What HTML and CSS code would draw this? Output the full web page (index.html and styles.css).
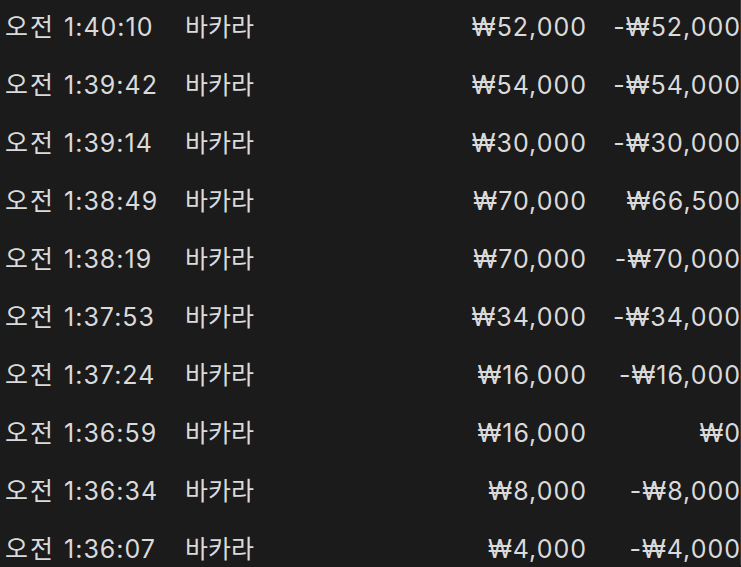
FILE: index.html
```html
<!DOCTYPE html>
<html lang="ko">
<head>
<meta charset="utf-8">
<link rel="stylesheet" href="styles.css">
</head>
<body>
<div class="list">
  <div class="row"><span class="time"><span class="ampm">오전</span> <span class="num">1:40:10</span></span><span class="game">바카라</span><span class="amt num">₩52,000</span><span class="net num">-₩52,000</span></div>
  <div class="row"><span class="time"><span class="ampm">오전</span> <span class="num">1:39:42</span></span><span class="game">바카라</span><span class="amt num">₩54,000</span><span class="net num">-₩54,000</span></div>
  <div class="row"><span class="time"><span class="ampm">오전</span> <span class="num">1:39:14</span></span><span class="game">바카라</span><span class="amt num">₩30,000</span><span class="net num">-₩30,000</span></div>
  <div class="row"><span class="time"><span class="ampm">오전</span> <span class="num">1:38:49</span></span><span class="game">바카라</span><span class="amt num">₩70,000</span><span class="net num">₩66,500</span></div>
  <div class="row"><span class="time"><span class="ampm">오전</span> <span class="num">1:38:19</span></span><span class="game">바카라</span><span class="amt num">₩70,000</span><span class="net num">-₩70,000</span></div>
  <div class="row"><span class="time"><span class="ampm">오전</span> <span class="num">1:37:53</span></span><span class="game">바카라</span><span class="amt num">₩34,000</span><span class="net num">-₩34,000</span></div>
  <div class="row"><span class="time"><span class="ampm">오전</span> <span class="num">1:37:24</span></span><span class="game">바카라</span><span class="amt num">₩16,000</span><span class="net num">-₩16,000</span></div>
  <div class="row"><span class="time"><span class="ampm">오전</span> <span class="num">1:36:59</span></span><span class="game">바카라</span><span class="amt num">₩16,000</span><span class="net num">₩0</span></div>
  <div class="row"><span class="time"><span class="ampm">오전</span> <span class="num">1:36:34</span></span><span class="game">바카라</span><span class="amt num">₩8,000</span><span class="net num">-₩8,000</span></div>
  <div class="row"><span class="time"><span class="ampm">오전</span> <span class="num">1:36:07</span></span><span class="game">바카라</span><span class="amt num">₩4,000</span><span class="net num">-₩4,000</span></div>
</div>
</body>
</html>
```
FILE: styles.css
```css
html, body {
  margin: 0;
  padding: 0;
  background: #1b1b1b;
  height: 100%;
  overflow: hidden;
}
.list {
  width: 740px;
  height: 567px;
  border-right: 1px solid #3a3a3a;
  font-family: "Inter", "Noto Sans CJK KR", sans-serif;
  font-size: 25px;
  color: #dadada;
}
.row {
  display: grid;
  grid-template-columns: 180px 1fr 220px 153px;
  align-items: center;
  height: 58.1px;
  margin-top: -2px;
  margin-bottom: 2px;
  padding-left: 5px;
  padding-right: 0;
  box-sizing: border-box;
  line-height: 1;
}
.num {
  letter-spacing: 1px;
}
.ampm {
  letter-spacing: 2px;
}
.time, .game { white-space: nowrap; }
.time .num { margin-left: 2px; }
.amt, .net {
  text-align: right;
  white-space: nowrap;
  margin-right: -1px;
}
.amt { padding-right: 1px; }
```
